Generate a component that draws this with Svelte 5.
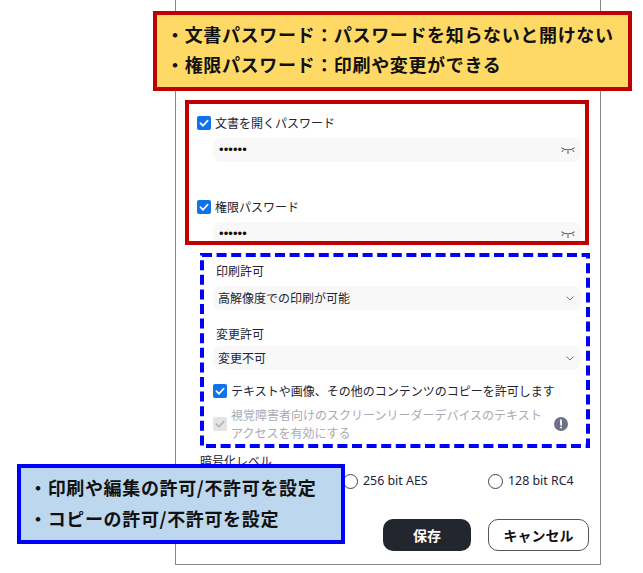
<script>
  const passwords = [
    { label: '文書を開くパスワード', gap: 'first' },
    { label: '権限パスワード', gap: 'second' }
  ];
  const selects = [
    { label: '印刷許可', value: '高解像度での印刷が可能', gap: 'print' },
    { label: '変更許可', value: '変更不可', gap: 'change' }
  ];
</script>

{#snippet checkmark()}
  <svg viewBox="0 0 14 14" width="14" height="14" aria-hidden="true">
    <path d="M3.4 7.2 6 9.8 10.7 4.6" fill="none" stroke="currentColor" stroke-width="1.7" stroke-linecap="round" stroke-linejoin="round" />
  </svg>
{/snippet}

<div class="page" lang="ja">
  <main class="panel">
    {#each passwords as p}
      <label class="check {p.gap}">
        <span class="box">{@render checkmark()}</span>
        <span>{p.label}</span>
      </label>
      <div class="field">
        <span class="dots">••••••</span>
        <svg class="eye" viewBox="0 0 14 8" width="14" height="8" aria-hidden="true">
          <path d="M.4 .8Q7 5 13.6 .8M2.8 2.6 .8 5M11.2 2.6 13.2 5M7 3.8V7" fill="none" stroke="#4a4d66" stroke-width="1" />
        </svg>
      </div>
    {/each}

    <section class="perm">
      {#each selects as s}
        <div class="perm-label {s.gap}">{s.label}</div>
        <div class="field select">
          <span>{s.value}</span>
          <svg viewBox="0 0 8 5" width="8" height="5" aria-hidden="true">
            <path d="M.6 .6 4 4 7.4 .6" fill="none" stroke="#6e7087" stroke-width="1" />
          </svg>
        </div>
      {/each}

      <label class="check copy">
        <span class="box">{@render checkmark()}</span>
        <span>テキストや画像、その他のコンテンツのコピーを許可します</span>
      </label>

      <div class="check disabled">
        <span class="box">{@render checkmark()}</span>
        <span class="wrap">視覚障害者向けのスクリーンリーダーデバイスのテキストアクセスを有効にする</span>
        <svg class="info" viewBox="0 0 14 14" width="14" height="14" aria-hidden="true">
          <circle cx="7" cy="7" r="7" fill="#6e7087" />
          <path d="M7 3.2V7.8" stroke="#fff" stroke-width="1.8" stroke-linecap="round" />
          <circle cx="7" cy="10.4" r="1" fill="#fff" />
        </svg>
      </div>
    </section>

    <div class="enc-label">暗号化レベル</div>
    <div class="radios">
      <label class="radio"><span class="circle"></span>256 bit AES</label>
      <label class="radio"><span class="circle"></span>128 bit RC4</label>
    </div>

    <div class="actions">
      <button class="save">保存</button>
      <button class="cancel">キャンセル</button>
    </div>
  </main>

  <div class="frame red"></div>
  <svg class="frame dashed" viewBox="0 0 390 195" width="390" height="195" aria-hidden="true">
    <rect x="2" y="2" width="386" height="191" fill="none" stroke="#0000ff" stroke-width="4" stroke-dasharray="10 4.6" />
  </svg>

  <aside class="note yellow">
    <p>・文書パスワード：パスワードを知らないと開けない</p>
    <p>・権限パスワード：印刷や変更ができる</p>
  </aside>
  <aside class="note blue">
    <p>・印刷や編集の許可/不許可を設定</p>
    <p>・コピーの許可/不許可を設定</p>
  </aside>
</div>

<style>
  :global(body) {
    margin: 0;
    background: #fff;
  }

  .page {
    position: relative;
    width: 643px;
    height: 573px;
    overflow: hidden;
    font-family: "Noto Sans CJK JP", "Noto Sans", sans-serif;
    font-size: 12px;
    line-height: 18px;
    color: #232333;
  }

  .panel {
    box-sizing: border-box;
    width: 426px;
    height: 565px;
    margin-left: 175px;
    padding: 114px 19px 0 21px;
    border: 1px solid #888;
    border-top: 0;
    background: #fff;
  }

  .check {
    display: flex;
    align-items: center;
    gap: 4px;
  }
  .check.second { margin-top: 36px; }
  .check.copy { margin-top: 12px; }
  .check.disabled { margin-top: 6px; color: #a9a9b3; }

  .box {
    flex: none;
    display: flex;
    width: 14px;
    height: 14px;
    border-radius: 2px;
    background: #0e72ed;
    color: #fff;
  }
  .disabled .box {
    background: #e4e4e4;
    color: #b5b5b5;
  }

  .wrap { width: 319px; }
  .info { flex: none; }

  .field {
    display: flex;
    align-items: center;
    justify-content: space-between;
    box-sizing: border-box;
    height: 24px;
    margin: 6px 0 0 16px;
    padding: 0 6px;
    border-radius: 8px;
    background: #f8f8f8;
  }
  .dots {
    color: #111;
    font-family: "Liberation Sans", sans-serif;
    font-size: 13px;
    letter-spacing: 0.1px;
  }
  .eye { margin: 2px 0 0; }

  .perm { padding-left: 16px; }
  .perm .field {
    margin-left: 0;
    padding: 0 7px 0 5px;
  }
  .perm-label { padding-left: 3px; }
  .perm-label.print { margin-top: 16px; }
  .perm-label.change { margin-top: 15px; }
  .perm-label.change + .field { margin-top: 3px; }

  .enc-label {
    margin: 10px 0 0 3px;
  }

  .radios {
    display: flex;
    margin-top: 2px;
    padding-left: 146px;
    font-family: "Noto Sans", sans-serif;
    font-size: 12.4px;
  }
  .radio {
    flex: none;
    display: flex;
    align-items: center;
    gap: 5px;
    width: 145px;
  }
  .circle {
    box-sizing: border-box;
    width: 15px;
    height: 15px;
    border: 1px solid #444;
    border-radius: 50%;
    background: #fff;
  }

  .actions {
    display: flex;
    justify-content: flex-end;
    gap: 17px;
    margin: 29px -8px 0 0;
  }
  button {
    box-sizing: border-box;
    height: 32px;
    padding: 0;
    font: inherit;
    font-size: 14px;
    border-radius: 10px;
  }
  .save {
    width: 88px;
    border: 0;
    background: #23252f;
    color: #fff;
    font-weight: 700;
  }
  .cancel {
    width: 101px;
    border: 1px solid #555;
    background: #fff;
    color: #111;
    font-weight: 700;
  }

  /* annotation layers drawn over the screenshot */
  .frame {
    position: absolute;
    box-sizing: border-box;
  }
  .frame.red {
    left: 185px;
    top: 100px;
    width: 404px;
    height: 145px;
    border: 4px solid #c00000;
  }
  .frame.dashed {
    left: 200px;
    top: 253px;
  }

  .note {
    position: absolute;
    box-sizing: border-box;
    color: #111;
    font-size: 18px;
    font-weight: 700;
    letter-spacing: 0.65px;
  }
  .note p { margin: 0; }
  .yellow {
    left: 153px;
    top: 11px;
    width: 479px;
    height: 80px;
    padding: 4px 0 0 9px;
    border: 4px solid #c00000;
    background: #ffd966;
    line-height: 30px;
  }
  .blue {
    left: 17px;
    top: 464px;
    width: 328px;
    height: 80px;
    padding: 4px 0 0 8px;
    border: 4px solid #0000ff;
    background: #bdd7ee;
    line-height: 31px;
  }
</style>
